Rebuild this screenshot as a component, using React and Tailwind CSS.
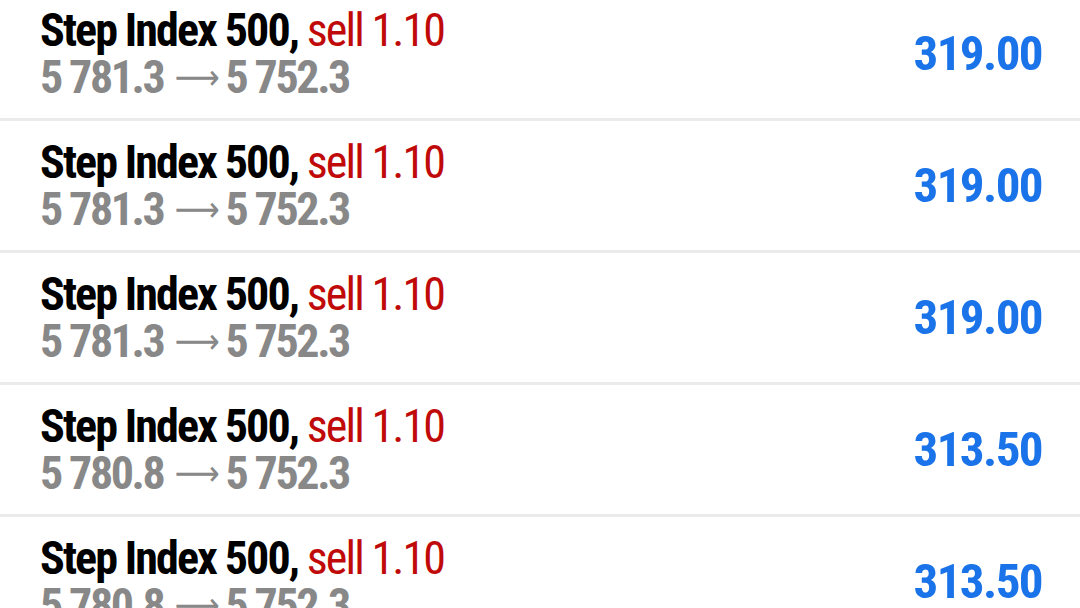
const trades = [
  { from: "5 781.3", to: "5 752.3", profit: "319.00" },
  { from: "5 781.3", to: "5 752.3", profit: "319.00" },
  { from: "5 781.3", to: "5 752.3", profit: "319.00" },
  { from: "5 780.8", to: "5 752.3", profit: "313.50" },
  { from: "5 780.8", to: "5 752.3", profit: "313.50" },
];

const TradeRow = ({ trade }) => {
  return (
    <div className="h-[132px] shrink-0 flex items-center justify-between pl-10 pr-[38px] border-b-[3px] border-[#ebebeb]">
      <div className="flex flex-col text-[46px] leading-[47px]">
        <div className="whitespace-nowrap tracking-[-1.9px]">
          <span className="font-bold text-black">Step Index 500,</span>{" "}
          <span className="text-[#c00a0a]">sell 1.10</span>
        </div>
        <div className="font-bold text-[#888888] whitespace-nowrap tracking-[-2.4px] flex items-center">
          <span>{trade.from}</span>
          <span className="font-normal text-[35px] tracking-normal ml-[11px] mr-[6px] font-['DejaVu_Sans']">⟶</span>
          <span>{trade.to}</span>
        </div>
      </div>
      <div className="font-bold text-[49px] tracking-[-1.6px] text-[#1a73e8]">{trade.profit}</div>
    </div>
  );
};

const App = () => {
  return (
    <div
      className="w-[1080px] h-[608px] overflow-hidden bg-white font-stretch-condensed"
      style={{ fontFamily: "Roboto, 'Noto Sans', sans-serif" }}
    >
      <div className="flex flex-col -mt-[11px]">
        {trades.map((t, i) => (
          <TradeRow key={i} trade={t} />
        ))}
      </div>
    </div>
  );
};

export default App;
